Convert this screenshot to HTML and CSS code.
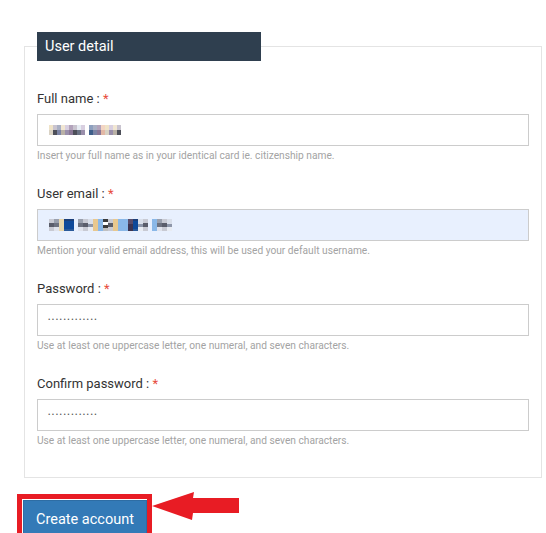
FILE: index.html
```html
<!DOCTYPE html>
<html lang="en">
<head>
<meta charset="utf-8">
<title>User detail</title>
<link rel="stylesheet" href="styles.css">
</head>
<body>
<main class="page">
  <fieldset class="panel">
    <legend class="panel-title">User detail</legend>

    <div class="group">
      <label class="label">Full name : <span class="req">*</span></label>
      <div class="field">
        <span class="pix">
          <i class="c1"></i><i class="c2"></i><i class="c3"></i><i class="c4"></i><i class="c5"></i><i class="c6"></i><i class="c2"></i><i class="c7"></i><i class="c5"></i><i class="gap"></i><i class="c8"></i><i class="c3"></i><i class="c6"></i><i class="c9"></i><i class="c1"></i><i class="c5"></i><i class="c4"></i><i class="c2"></i>
        </span>
      </div>
      <p class="help">Insert your full name as in your identical card ie. citizenship name.</p>
    </div>

    <div class="group">
      <label class="label">User email : <span class="req">*</span></label>
      <div class="field autofill">
        <span class="pix pix-mail">
          <i class="m1"></i><i class="m2"></i><i class="m3"></i><i class="m4"></i><i class="m4"></i><i class="gap"></i><i class="m2"></i><i class="m1"></i><i class="m5"></i><i class="m6"></i><i class="m7"></i><i class="m8"></i><i class="m1"></i><i class="m6"></i><i class="m7"></i><i class="m7"></i><i class="m9"></i><i class="m4"></i><i class="m5"></i><i class="m1"></i><i class="gap"></i><i class="m7"></i><i class="m2"></i><i class="m1"></i><i class="m5"></i>
        </span>
      </div>
      <p class="help">Mention your valid email address, this will be used your default username.</p>
    </div>

    <div class="group">
      <label class="label">Password : <span class="req">*</span></label>
      <div class="field"><span class="dots">•••••••••••••</span></div>
      <p class="help">Use at least one uppercase letter, one numeral, and seven characters.</p>
    </div>

    <div class="group">
      <label class="label">Confirm password : <span class="req">*</span></label>
      <div class="field"><span class="dots">•••••••••••••</span></div>
      <p class="help">Use at least one uppercase letter, one numeral, and seven characters.</p>
    </div>
  </fieldset>

  <div class="actions">
    <div class="highlight">
      <button class="btn" type="button">Create account</button>
    </div>
    <svg class="arrow" width="90" height="30" viewBox="0 0 90 30" aria-hidden="true">
      <polygon points="0,14 42,0 41,6 87,6 87,21 41,21 40,28" fill="#e81c24"/>
    </svg>
  </div>
</main>
</body>
</html>
```

FILE: styles.css
```css
html, body {
  margin: 0;
  padding: 0;
  background: #ffffff;
}

body {
  font-family: Roboto, "Liberation Sans", Arial, sans-serif;
  color: #333333;
}

.page {
  padding: 32px 5px 0 24px;
}

.panel {
  margin: 0;
  width: 518px;
  box-sizing: border-box;
  border: 1px solid #e4e4e4;
  padding: 29px 12px 7px 12px;
  min-width: 0;
}

.panel-title {
  box-sizing: border-box;
  width: 224px;
  height: 29px;
  padding: 0 8px;
  background: #2f3f4f;
  color: #ffffff;
  font-size: 14.5px;
  line-height: 29px;
}

.group {
  margin-bottom: 22px;
}

.label {
  display: block;
  font-size: 13px;
  line-height: 18px;
  color: #333333;
  margin-bottom: 6px;
}

.req {
  color: #e74c3c;
}

.field {
  box-sizing: border-box;
  height: 32px;
  border: 1px solid #cccccc;
  background: #ffffff;
  display: flex;
  align-items: center;
  padding: 0 10px;
}

.field.autofill {
  background: #e8f0fe;
}

.help {
  margin: 3px 0 0 0;
  font-size: 10.2px;
  line-height: 14px;
  color: #a3a3a3;
}

.dots {
  font-size: 7px;
  letter-spacing: 1.5px;
  color: #555555;
  line-height: 1;
}

.pix {
  display: flex;
  height: 10px;
  margin-left: 1px;
}

.pix i {
  display: block;
  width: 4px;
  height: 10px;
}

.pix i.gap { width: 4px; background: transparent; }

.c1 { background: linear-gradient(#efe3c8 50%, #d9d2c4 50%); }
.c2 { background: linear-gradient(#c9c4cf 50%, #4d4f59 50%); }
.c3 { background: linear-gradient(#aab0c4 50%, #7b83a4 50%); }
.c4 { background: linear-gradient(#f1e6d2 50%, #b9b1a6 50%); }
.c5 { background: linear-gradient(#d8cfe0 50%, #9a8fab 50%); }
.c6 { background: linear-gradient(#b3a3bb 50%, #8a7796 50%); }
.c7 { background: linear-gradient(#e6ecf3 50%, #6a7284 50%); }
.c8 { background: linear-gradient(#8ea0bf 50%, #3f5f8a 50%); }
.c9 { background: linear-gradient(#f3d5c3 50%, #e2b8a5 50%); }

.pix-mail {
  height: 12px;
}

.pix-mail i {
  width: 5px;
  height: 12px;
}

.m1 { background: linear-gradient(#c8cad3 33%, #5a5d6a 33%, #5a5d6a 66%, #c8cad3 66%); }
.m2 { background: linear-gradient(#9aa0ad 33%, #6d7280 33%, #6d7280 66%, #e0e3ec 66%); }
.m3 { background: #e8d7ae; }
.m4 { background: linear-gradient(#1a3f7a 20%, #0f4a9a 20%, #0f4a9a 80%, #2a5a9a 80%); }
.m5 { background: linear-gradient(#d9dfea 40%, #8e97aa 40%, #8e97aa 70%, #e8ecf3 70%); }
.m6 { background: #e8c88f; }
.m7 { background: #8ab8e8; }
.m8 { background: linear-gradient(#3a3a3a 25%, #ffffff 25%, #ffffff 50%, #3a3a3a 50%, #3a3a3a 75%, #c0c0c0 75%); }
.m9 { background: linear-gradient(#5a4d6a 40%, #3e3550 40%); }

.actions {
  position: relative;
  margin: 16px 0 0 -7px;
  display: flex;
}

.highlight {
  border: 5px solid #e81c24;
  padding: 1px 0 0 1px;
  background: #ffffff;
}

.btn {
  display: block;
  width: 124px;
  height: 40px;
  padding: 0;
  margin: 0;
  border: 1px solid #2e6da4;
  background: #337ab7;
  color: #ffffff;
  font-family: Roboto, "Liberation Sans", Arial, sans-serif;
  font-size: 14.5px;
  line-height: 36px;
  text-align: center;
  border-radius: 0;
  box-sizing: border-box;
}

.arrow {
  position: absolute;
  left: 135px;
  top: -2px;
}
```
